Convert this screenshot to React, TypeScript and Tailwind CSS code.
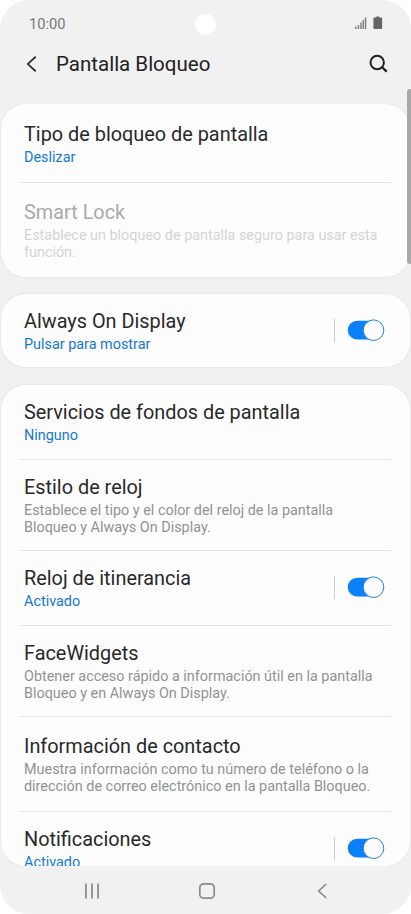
import type { ReactNode } from "react";

type Tone = "link" | "muted" | "disabled";

const toneClass: Record<Tone, string> = {
  link: "text-[#1478d4]",
  muted: "text-[#929292]",
  disabled: "text-[#d4d4d4]",
};

function Toggle() {
  return (
    <div className="flex shrink-0 items-center">
      <span className="h-[23px] w-px bg-[#cfcfcf]" />
      <svg width="38" height="24" viewBox="0 0 38 24" className="ml-3">
        <rect x="0.8" y="2.8" width="34" height="18.8" rx="9.4" fill="#0a80fb" />
        <circle cx="26.5" cy="12.2" r="10.3" fill="#fcfcfc" stroke="#2181dc" strokeWidth="1" />
      </svg>
    </div>
  );
}

function Row({
  title,
  lines,
  className,
  tone = "link",
  toggle = false,
}: {
  title: string;
  lines: string[];
  className: string;
  tone?: Tone;
  toggle?: boolean;
}) {
  return (
    <div className={`mx-[19px] flex justify-between border-[#e4e4e4] pl-1 ${className}`}>
      <div className="whitespace-nowrap">
        <h2
          className={`text-[19.88px] leading-6 ${tone === "disabled" ? "text-[#aaaaaa]" : "text-[#292929]"}`}
        >
          {title}
        </h2>
        <p className={`mt-[3px] text-[14.4px] leading-[16.5px] ${toneClass[tone]}`}>
          {lines.map((line) => (
            <span key={line} className="block">
              {line}
            </span>
          ))}
        </p>
      </div>
      {toggle && (
        <div className="mr-[6px] mt-[8px]">
          <Toggle />
        </div>
      )}
    </div>
  );
}

function Card({ className, children }: { className: string; children: ReactNode }) {
  return (
    <section
      className={`mx-px shrink-0 overflow-hidden rounded-[25px] bg-[#fdfdfd] shadow-[0_0_0_1px_#e9e9e9] ${className}`}
    >
      {children}
    </section>
  );
}

export default function App() {
  return (
    <div className="h-[914px] w-[411px] overflow-hidden bg-white font-['Roboto',sans-serif]">
      <div className="relative flex h-full flex-col overflow-hidden rounded-[29px] bg-[#f1f1f1]">
        <span className="absolute left-[195px] top-[14px] h-[21px] w-[21px] rounded-full bg-white" />
        <span className="absolute right-0 top-[89px] z-10 h-[175px] w-1 rounded-l-[3px] bg-[#a9a9a9]" />

        <div className="flex h-[46px] shrink-0 items-center justify-between pl-[29px] pr-[28px]">
          <span className="mt-[2px] text-[14.7px] text-[#777]">10:00</span>
          <svg width="28" height="14" viewBox="0 0 28 14" fill="#646464">
            <path
              d="M0 10.5h1.5V13H0zM2.7 9h1.5v4H2.7zM5.2 6.500h1.500V13H5.200zM7.500 4H9v9H7.500zM9.800 1.500h1.500V13H9.800z"
              opacity=".8"
            />
            <path d="M21.300 .5h2.900v1h1.900a1 1 0 0 1 1 1V12a1 1 0 0 1-1 1h-6.700a1 1 0 0 1-1-1V2.500a1 1 0 0 1 1-1h1.900z" />
          </svg>
        </div>

        <header className="flex h-[35px] shrink-0 items-center pl-[26px] pr-[23px]">
          <svg width="12" height="18" viewBox="0 0 12 18" fill="none" stroke="#222" strokeWidth="1.7">
            <path d="M9.700 1.700 1.900 9l7.800 7.300" />
          </svg>
          <h1 className="ml-[18px] pt-[2px] text-[20.5px] text-[#222]">Pantalla Bloqueo</h1>
          <svg
            width="20"
            height="20"
            viewBox="0 0 20 20"
            fill="none"
            stroke="#222"
            strokeWidth="2"
            className="ml-auto"
          >
            <circle cx="9.200" cy="8.500" r="6.700" />
            <path d="m13.800 13 4.900 4.700" strokeWidth="2.300" />
          </svg>
        </header>

        <main className="mt-[23px] flex h-[762px] shrink-0 flex-col overflow-hidden">
          <Card className="h-[173px]">
            <Row
              title="Tipo de bloqueo de pantalla"
              lines={["Deslizar"]}
              className="h-[79px] border-b pt-[19px]"
            />
            <Row
              title="Smart Lock"
              lines={["Establece un bloqueo de pantalla seguro para usar esta", "función."]}
              tone="disabled"
              className="pt-[18px]"
            />
          </Card>
          <Card className="mt-[17px] h-[73px]">
            <Row title="Always On Display" lines={["Pulsar para mostrar"]} className="pt-[16px]" toggle />
          </Card>
          <Card className="mt-[18px] h-[481px]">
            <Row
              title="Servicios de fondos de pantalla"
              lines={["Ninguno"]}
              className="h-[75px] border-b pt-[16px]"
            />
            <Row
              title="Estilo de reloj"
              lines={["Establece el tipo y el color del reloj de la pantalla", "Bloqueo y Always On Display."]}
              tone="muted"
              className="h-[91px] border-b pt-[16px]"
            />
            <Row
              title="Reloj de itinerancia"
              lines={["Activado"]}
              className="h-[75px] border-b pt-[16px]"
              toggle
            />
            <Row
              title="FaceWidgets"
              lines={["Obtener acceso rápido a información útil en la pantalla", "Bloqueo y en Always On Display."]}
              tone="muted"
              className="h-[91px] border-b pt-[16px]"
            />
            <Row
              title="Información de contacto"
              lines={[
                "Muestra información como tu número de teléfono o la",
                "dirección de correo electrónico en la pantalla Bloqueo.",
              ]}
              tone="muted"
              className="h-[95px] border-b pt-[18px]"
            />
            <Row title="Notificaciones" lines={["Activado"]} className="pt-[16px]" toggle />
          </Card>
        </main>

        <nav className="flex h-12 items-center pt-px text-[#8c8c8c]">
          <svg width="16" height="16" viewBox="0 0 16 16" fill="currentColor" className="ml-[84px]">
            <path d="M1 .5h1.800v15H1zM7.100 .5h1.800v15H7.100zM13.200 .5H15v15h-1.800z" />
          </svg>
          <svg
            width="18"
            height="18"
            viewBox="0 0 18 18"
            fill="none"
            stroke="currentColor"
            strokeWidth="1.700"
            className="ml-[98px]"
          >
            <rect x="1.800" y="1.800" width="14.400" height="14.400" rx="4" />
          </svg>
          <svg
            width="12"
            height="16"
            viewBox="0 0 12 16"
            fill="none"
            stroke="currentColor"
            strokeWidth="1.700"
            className="ml-[100px]"
          >
            <path d="M10.200 1 2.700 8l7.500 7" />
          </svg>
        </nav>
      </div>
    </div>
  );
}
